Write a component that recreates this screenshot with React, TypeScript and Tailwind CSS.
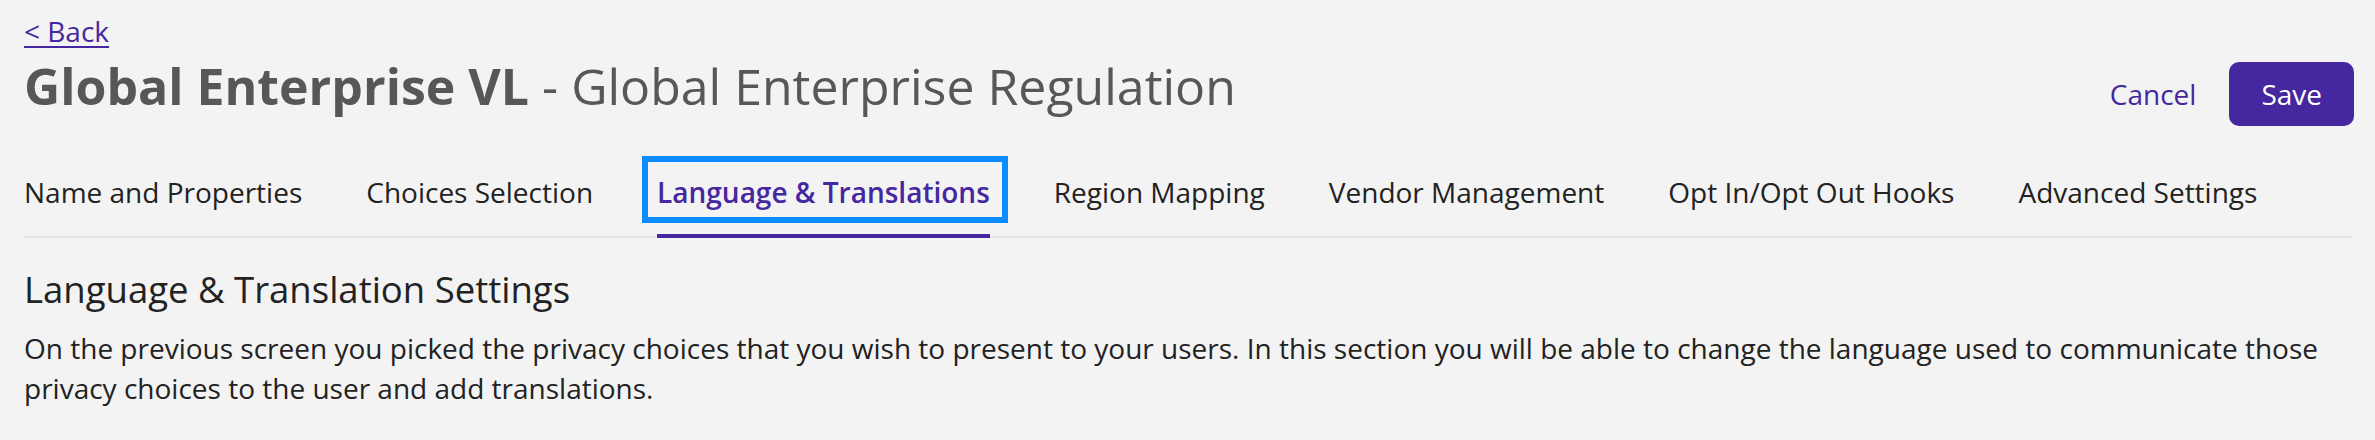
import React from "react";

const tabs = [
  "Name and Properties",
  "Choices Selection",
  "Language & Translations",
  "Region Mapping",
  "Vendor Management",
  "Opt In/Opt Out Hooks",
  "Advanced Settings",
];

const ACTIVE = "Language & Translations";

const App: React.FC = () => {
  return (
    <div
      className="min-h-screen bg-[#f3f3f3] pl-6 pr-[21px] pt-[10px] text-[#222]"
      style={{ fontFamily: '"Open Sans", "Noto Sans", sans-serif' }}
    >
      {/* header */}
      <div className="flex items-start justify-between">
        <div>
          <a href="#" className="block text-[28px] leading-[42px] text-[#4527a0] underline underline-offset-[4px]">
            &lt; Back
          </a>
          <h1 className="mt-[2px] text-[50px] leading-[64px] text-[#575757]">
            <span className="font-bold">Global Enterprise VL</span> - Global Enterprise Regulation
          </h1>
        </div>
        <div className="mt-[52px] flex items-center gap-[33px]">
          <button className="text-[28px] leading-[42px] text-[#4527a0]">Cancel</button>
          <button className="rounded-[10px] bg-[#4527a0] px-[32px] py-[11px] text-[28px] leading-[42px] text-white">
            Save
          </button>
        </div>
      </div>

      {/* tabs */}
      <div className="mr-[2px] mt-[45px] flex gap-[64px] border-b-2 border-[#e3e3e3]">
        {tabs.map((tab) => {
          const active = tab === ACTIVE;
          return (
            <div
              key={tab}
              className={
                active
                  ? "relative pb-[23px] text-[28px] font-semibold leading-[42px] text-[#4527a0]"
                  : "relative pb-[23px] text-[28px] leading-[42px] text-[#222]"
              }
            >
              {tab}
              {active && (
                <>
                  <span className="absolute -left-[15px] -right-[18px] -top-[15px] bottom-[13px] border-[6px] border-[#0a8cff]" />
                  <span className="absolute -bottom-[2px] left-0 right-0 h-[4px] bg-[#4527a0]" />
                </>
              )}
            </div>
          );
        })}
      </div>

      {/* section */}
      <h2 className="mt-[27px] text-[36.5px] leading-[48px] text-[#222]">Language &amp; Translation Settings</h2>
      <p className="mt-[15px] text-[28px] leading-[40px] text-[#222]">
        On the previous screen you picked the privacy choices that you wish to present to your users. In this section
        you will be able to change the language used to communicate those privacy choices to the user and add
        translations.
      </p>
    </div>
  );
};

export default App;
